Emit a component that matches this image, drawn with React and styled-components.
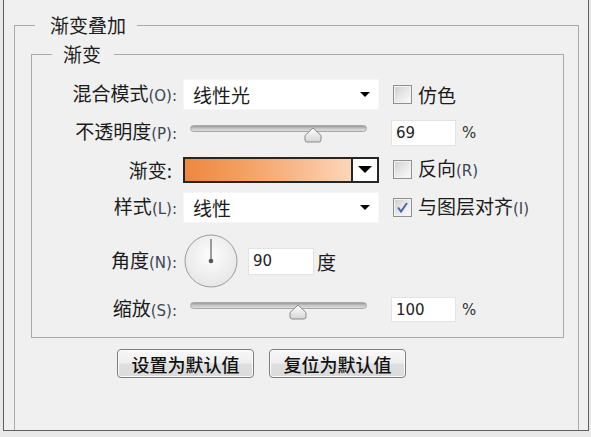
import React from 'react';
import styled, { createGlobalStyle } from 'styled-components';

const Global = createGlobalStyle`
  html, body { margin: 0; padding: 0; }
  body {
    background: #e9e9e9;
    font-family: "Noto Sans CJK SC", "Noto Sans", sans-serif;
    color: #1b1b1b;
  }
`;

const Frame = styled.div`
  box-sizing: border-box;
  width: 586px;
  height: 431px;
  margin-left: 3px;
  background: #f0f0f0;
  border: 1px solid #5f5f5f;
  border-top: none;
  padding: 13px 9px 0 10px;
  display: flex;
  flex-direction: column;
`;

const Group = styled.fieldset`
  margin: 0;
  min-width: 0;
  border: 1px solid #ababab;
  padding: ${p => p.$pad};
  ${p => (p.$open ? 'border-bottom: none; flex: 1;' : '')}
`;

const Legend = styled.legend`
  font-size: 19px;
  line-height: 24px;
  padding: ${p => p.$pad};
  margin-left: ${p => p.$ml}px;
  color: #1b1b1b;
`;

const Row = styled.div`
  display: grid;
  grid-template-columns: 125px 196px auto;
  column-gap: 6px;
  align-items: center;
  height: ${p => p.$h}px;
  margin-top: ${p => p.$mt || 0}px;
`;

const Label = styled.div`
  text-align: right;
  font-size: 19px;
  line-height: 24px;
  white-space: nowrap;
  padding-right: ${p => p.$pr || 0}px;
`;

const Key = styled.span`
  font-family: "DejaVu Sans", sans-serif;
  font-size: 15px;
  color: #3b4655;
`;

const Select = styled.div`
  box-sizing: border-box;
  height: 31px;
  background: #fff;
  border: 1px solid #f6f6f6;
  display: flex;
  align-items: center;
  justify-content: space-between;
  padding: 0 8px 0 9px;
  font-size: 19px;
`;

const Caret = styled.span`
  width: 0;
  height: 0;
  border-left: ${p => p.$w / 2}px solid transparent;
  border-right: ${p => p.$w / 2}px solid transparent;
  border-top: ${p => p.$h}px solid #000;
`;

const CheckField = styled.div`
  display: flex;
  align-items: center;
  gap: 6px;
  margin-left: 8px;
  font-size: 19px;
  white-space: nowrap;
`;

const CheckText = styled.span`
  line-height: 24px;
`;

const Box = styled.span`
  box-sizing: border-box;
  width: 19px;
  height: 19px;
  border: 1px solid #8f9090;
  background: linear-gradient(135deg, #cdcdcd 0%, #e6e6e6 45%, #fbfbfb 100%);
  box-shadow: inset 0 0 0 1px #f3f3f3;
  display: flex;
  align-items: center;
  justify-content: center;
`;

const NumField = styled.div`
  display: flex;
  align-items: center;
  gap: 6px;
  margin-left: ${p => p.$ml || 0}px;
`;

const NumBox = styled.div`
  box-sizing: border-box;
  width: ${p => p.$w || 65}px;
  height: ${p => p.$h || 26}px;
  background: #fff;
  border: 1px solid #e3e3e3;
  display: flex;
  align-items: center;
  padding-left: 4px;
  font-family: "DejaVu Sans", sans-serif;
  font-size: 15px;
  color: #222;
`;

const Unit = styled.span`
  font-family: "DejaVu Sans", sans-serif;
  font-size: 15px;
  color: #333;
`;

const UnitCJK = styled.span`
  font-size: 19px;
  margin-left: 3px;
`;

const Slider = styled.div`
  position: relative;
  height: 26px;
  margin: 0 12px 0 7px;
  align-self: start;
`;

const Track = styled.div`
  position: absolute;
  left: 0;
  right: 0;
  top: ${p => p.$top}px;
  height: 7px;
  box-sizing: border-box;
  border-radius: 4px;
  border: 1px solid #a8a8a8;
  background: linear-gradient(#9c9c9c, #c6c6c6 50%, #dedede);
`;

const ThumbSvg = styled.svg`
  position: absolute;
  top: ${p => p.$top}px;
  transform: translateX(-50%);
`;

const Gradient = styled.div`
  box-sizing: border-box;
  height: 26px;
  border: 2px solid #262626;
  display: flex;
  background: #fff;
`;

const GradFill = styled.div`
  flex: 1;
  border-right: 2px solid #262626;
  background: linear-gradient(to right, #ee8740 0%, #f39c5c 30%, #f8b789 65%, #fdd6b8 100%);
`;

const GradButton = styled.div`
  width: 24px;
  display: flex;
  align-items: center;
  justify-content: center;
`;

const AngleCell = styled.div`
  display: flex;
  align-items: center;
  margin-left: 1px;
`;

const DialSvg = styled.svg`
  margin-right: 10px;
  flex: none;
`;

const Buttons = styled.div`
  display: flex;
  gap: 15px;
  padding-left: 86px;
  margin-top: 11px;
`;

const Button = styled.button`
  box-sizing: border-box;
  width: 137px;
  height: 29px;
  padding: 0;
  border: 1px solid #7c7c7c;
  border-radius: 4px;
  background: linear-gradient(#f8f8f8, #eeeeee 48%, #e0e0e0 52%, #dadada);
  box-shadow: inset 0 0 0 1px #fbfbfb;
  font-family: "Noto Sans CJK SC", sans-serif;
  font-size: 18px;
  font-weight: 500;
  color: #111;
`;

function Thumb({ pos, top }) {
  return (
    <ThumbSvg $top={top} width="19" height="16" viewBox="0 0 19 16" style={{ left: `${pos}%` }}>
      <defs>
        <linearGradient id="tg" x1="0" y1="0" x2="0" y2="1">
          <stop offset="0" stopColor="#ffffff" />
          <stop offset="1" stopColor="#d6d6d6" />
        </linearGradient>
      </defs>
      <path d="M1.5 8.5 L9.5 1 L17.5 8.5 L17.5 13 Q17.5 15 15.5 15 L3.5 15 Q1.5 15 1.5 13 Z"
        fill="url(#tg)" stroke="#8a8a8a" strokeWidth="1" />
    </ThumbSvg>
  );
}

function SliderCtl({ pos }) {
  return (
    <Slider>
      <Track $top={6} />
      <Thumb pos={pos} top={8} />
    </Slider>
  );
}

function CheckMark() {
  return (
    <svg width="13" height="13" viewBox="0 0 13 13">
      <path d="M2 6.5 L5 10.5 L11 2" fill="none" stroke="#4e63a8" strokeWidth="2" />
    </svg>
  );
}

function Dial() {
  return (
    <DialSvg width="54" height="54" viewBox="0 0 54 54">
      <defs>
        <radialGradient id="dg" cx="0.5" cy="0.4" r="0.6">
          <stop offset="0" stopColor="#fdfdfd" />
          <stop offset="1" stopColor="#e6e6e6" />
        </radialGradient>
      </defs>
      <circle cx="27" cy="27" r="26" fill="url(#dg)" stroke="#9c9c9c" strokeWidth="1" />
      <line x1="27" y1="27" x2="27" y2="5" stroke="#6a6a6a" strokeWidth="1.3" />
      <circle cx="27" cy="27" r="2.3" fill="#555" />
    </DialSvg>
  );
}

export default function App() {
  return (
    <>
      <Global />
      <Frame>
        <Group $open $pad="5px 14px 0 16px">
          <Legend $ml={4} $pad="0 11px 0 15px">渐变叠加</Legend>
          <Group $pad="13px 0 16px 20px">
            <Legend $ml={0} $pad="0 13px 0 11px">渐变</Legend>

            <Row $h={31}>
              <Label>混合模式<Key>(O):</Key></Label>
              <Select>线性光<Caret $w={10} $h={5} /></Select>
              <CheckField><Box /><CheckText>仿色</CheckText></CheckField>
            </Row>

            <Row $h={26} $mt={9}>
              <Label>不透明度<Key>(P):</Key></Label>
              <SliderCtl pos={69.5} />
              <NumField $ml={6}>
                <NumBox>69</NumBox>
                <Unit>%</Unit>
              </NumField>
            </Row>

            <Row $h={26} $mt={11}>
              <Label $pr={5}>渐变:</Label>
              <Gradient>
                <GradFill />
                <GradButton><Caret $w={14} $h={7} /></GradButton>
              </Gradient>
              <CheckField><Box /><CheckText>反向<Key>(R)</Key></CheckText></CheckField>
            </Row>

            <Row $h={31} $mt={10}>
              <Label>样式<Key>(L):</Key></Label>
              <Select>线性<Caret $w={10} $h={5} /></Select>
              <CheckField><Box><CheckMark /></Box><CheckText>与图层对齐<Key>(I)</Key></CheckText></CheckField>
            </Row>

            <Row $h={54} $mt={11}>
              <Label>角度<Key>(N):</Key></Label>
              <AngleCell>
                <Dial />
                <NumBox $w={66} $h={27}>90</NumBox>
                <UnitCJK>度</UnitCJK>
              </AngleCell>
            </Row>

            <Row $h={25} $mt={8}>
              <Label>缩放<Key>(S):</Key></Label>
              <SliderCtl pos={61} />
              <NumField $ml={6}>
                <NumBox $h={25}>100</NumBox>
                <Unit>%</Unit>
              </NumField>
            </Row>
          </Group>

          <Buttons>
            <Button>设置为默认值</Button>
            <Button>复位为默认值</Button>
          </Buttons>
        </Group>
      </Frame>
    </>
  );
}
